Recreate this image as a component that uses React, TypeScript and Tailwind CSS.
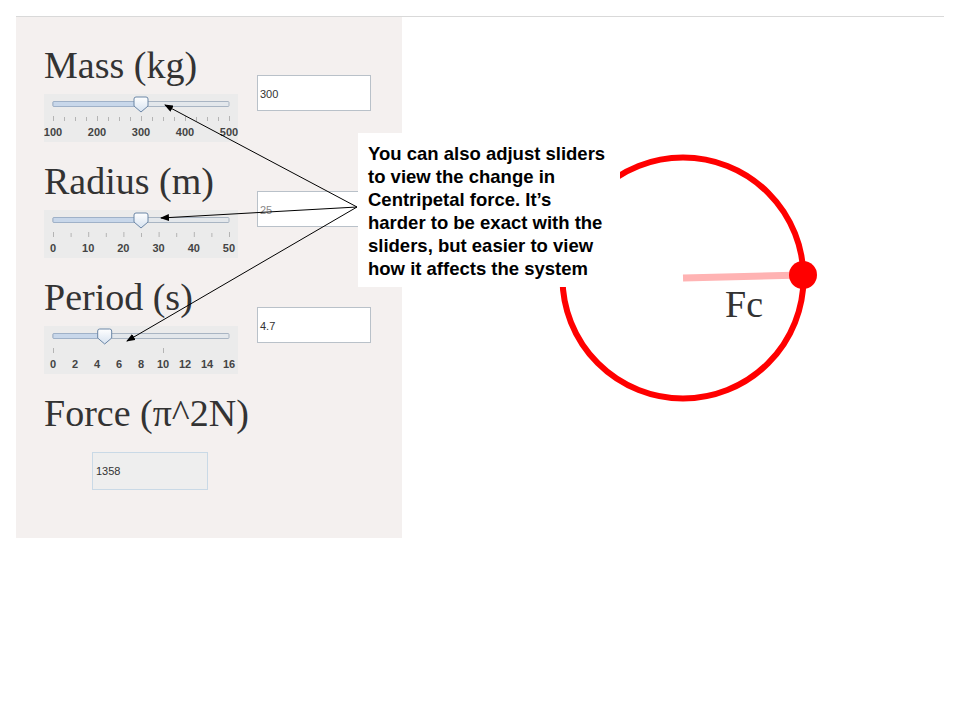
import React from "react";

type SliderProps = {
  min: number;
  max: number;
  value: number;
  labels: number[];
  ticks: { v: number; major?: boolean }[];
};

const TRACK_X = 9;
const TRACK_W = 176;

const Slider = ({ min, max, value, labels, ticks }: SliderProps) => {
  const pos = (v: number) => TRACK_X + ((v - min) / (max - min)) * TRACK_W;
  const tx = pos(value);
  return (
    <div className="flex flex-col w-[194px] h-[48px] bg-[#ebebeb]">
      <svg width="194" height="30" viewBox="0 0 194 30">
        <defs>
          <linearGradient id="thumbFill" x1="0" y1="0" x2="0" y2="1">
            <stop offset="0" stopColor="#ffffff" />
            <stop offset="1" stopColor="#d6e2f0" />
          </linearGradient>
        </defs>
        <rect x={TRACK_X} y="7.5" width={TRACK_W} height="5" rx="1" fill="#e3e7eb" stroke="#a9b5c3" />
        <rect x={TRACK_X} y="7.5" width={tx - TRACK_X} height="5" rx="1" fill="#c8d7ea" stroke="#9fb1c8" />
        {ticks.map((t) => (
          <line
            key={t.v}
            x1={pos(t.v) + 0.5}
            x2={pos(t.v) + 0.5}
            y1={t.major ? 22 : 23}
            y2="27"
            stroke="#b4b4b4"
            strokeWidth="1"
          />
        ))}
        <path
          d={`M${tx - 7} 5 Q${tx - 7} 3 ${tx - 5} 3 H${tx + 5} Q${tx + 7} 3 ${tx + 7} 5 V12 L${tx} 18 L${tx - 7} 12 Z`}
          fill="url(#thumbFill)"
          stroke="#6b86a6"
          strokeWidth="1"
        />
      </svg>
      <div className="flex justify-between ml-[9px] mr-[9px] mt-[2px]">
        {labels.map((l) => (
          <span key={l} className="w-0 flex justify-center overflow-visible">
            <span className="text-[11px] leading-[13px] font-bold text-[#444]">{l}</span>
          </span>
        ))}
      </div>
    </div>
  );
};

const Field = ({ value, muted }: { value: string; muted?: boolean }) => (
  <div className="mt-[29px] w-[114px] h-[36px] border border-[#b9c1c9] bg-white flex items-center pl-[2px] pt-[2px]">
    <span className={muted ? "text-[11px] text-[#8a8a8a]" : "text-[11px] text-[#333]"}>{value}</span>
  </div>
);

const Label = ({ children }: { children: React.ReactNode }) => (
  <div className="text-[38px] leading-[38px] text-[#333] whitespace-nowrap" style={{ fontFamily: '"Liberation Serif", serif' }}>
    {children}
  </div>
);

const range = (n: number, step: number, start: number, majorEvery: number) =>
  Array.from({ length: n }, (_, i) => ({ v: start + i * step, major: i % majorEvery === 0 }));

export default function App() {
  return (
    <div className="relative w-[960px] h-[720px] bg-white" style={{ fontFamily: '"Liberation Sans", Arial, sans-serif' }}>
      <div className="mx-4 pt-4">
        <div className="border-t border-[#d9d9d9] flex">
          <div className="w-[386px] h-[521px] bg-[#f4f0ef] pl-[28px] pt-[29px] flex flex-col gap-[20px]">
            <div className="flex items-start gap-[19px]">
              <div className="flex flex-col">
                <Label>Mass (kg)</Label>
                <div className="mt-[10px]">
                  <Slider min={100} max={500} value={300} labels={[100, 200, 300, 400, 500]} ticks={range(17, 25, 100, 4)} />
                </div>
              </div>
              <Field value="300" />
            </div>
            <div className="flex items-start gap-[19px]">
              <div className="flex flex-col">
                <Label>Radius (m)</Label>
                <div className="mt-[10px]">
                  <Slider min={0} max={50} value={25} labels={[0, 10, 20, 30, 40, 50]} ticks={range(11, 5, 0, 2)} />
                </div>
              </div>
              <Field value="25" muted />
            </div>
            <div className="flex items-start gap-[19px]">
              <div className="flex flex-col">
                <Label>Period (s)</Label>
                <div className="mt-[10px]">
                  <Slider
                    min={0}
                    max={16}
                    value={4.7}
                    labels={[0, 2, 4, 6, 8, 10, 12, 14, 16]}
                    ticks={[{ v: 0, major: true }, { v: 10, major: true }]}
                  />
                </div>
              </div>
              <Field value="4.7" />
            </div>
            <div className="flex flex-col">
              <Label>Force (π^2N)</Label>
              <div className="mt-[20px] ml-[48px] w-[116px] h-[38px] border border-[#c9d9e6] bg-[#eeeeee] flex items-center pl-[3px]">
                <span className="text-[11px] text-[#333]">1358</span>
              </div>
            </div>
          </div>
          <svg width="542" height="521" viewBox="0 0 542 521">
            <circle cx="281" cy="261" r="120.5" fill="none" stroke="#ff0000" strokeWidth="6" />
            <line x1="281" y1="261" x2="401" y2="258" stroke="#ffb3b3" strokeWidth="7" />
            <circle cx="401" cy="258" r="14" fill="#ff0000" />
            <text x="323" y="300" fontSize="38" fill="#333" style={{ fontFamily: '"Liberation Serif", serif' }}>
              Fc
            </text>
          </svg>
        </div>
      </div>

      <svg className="absolute left-0 top-0 pointer-events-none" width="960" height="720" viewBox="0 0 960 720">
        <defs>
          <marker id="arrowHead" markerWidth="9" markerHeight="7" refX="8" refY="3.5" orient="auto" markerUnits="userSpaceOnUse">
            <path d="M0 0 L9 3.5 L0 7 Z" fill="#000" />
          </marker>
        </defs>
        <line x1="357" y1="207" x2="165" y2="105" stroke="#000" strokeWidth="1" markerEnd="url(#arrowHead)" />
        <line x1="357" y1="207" x2="161" y2="218" stroke="#000" strokeWidth="1" markerEnd="url(#arrowHead)" />
        <line x1="357" y1="207" x2="127" y2="341" stroke="#000" strokeWidth="1" markerEnd="url(#arrowHead)" />
      </svg>

      <div className="absolute left-[358px] top-[133px] w-[262px] h-[154px] bg-white pl-[10px] pt-[9px] text-[18.5px] leading-[23px] font-bold text-black">
        <div className="whitespace-nowrap">You can also adjust sliders</div>
        <div className="whitespace-nowrap">to view the change in</div>
        <div className="whitespace-nowrap">Centripetal force. It’s</div>
        <div className="whitespace-nowrap">harder to be exact with the</div>
        <div className="whitespace-nowrap">sliders, but easier to view</div>
        <div className="whitespace-nowrap">how it affects the system</div>
      </div>
    </div>
  );
}
